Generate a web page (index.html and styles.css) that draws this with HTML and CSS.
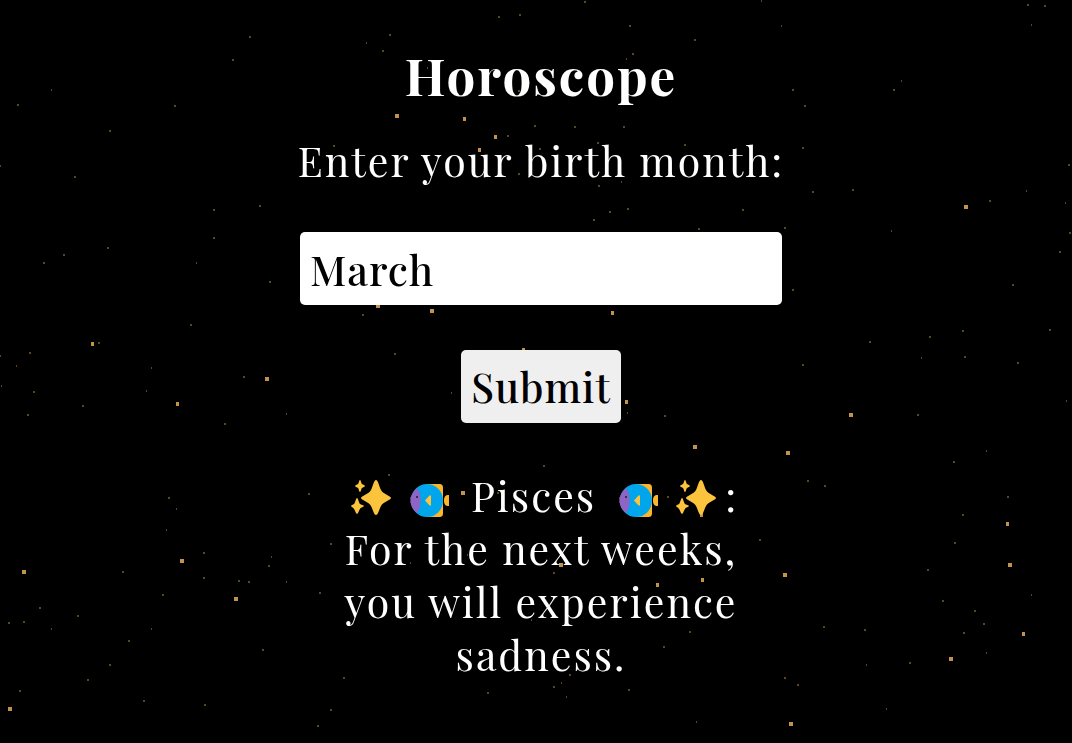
FILE: index.html
```html
<!DOCTYPE html>
<html lang="en">
<head>
<meta charset="utf-8">
<meta name="viewport" content="width=device-width, initial-scale=1">
<title>Horoscope</title>
<link rel="stylesheet" href="styles.css">
</head>
<body>
<svg class="sky" viewBox="0 0 1072 743" preserveAspectRatio="xMidYMid slice" aria-hidden="true">
  <path class="dust" d="M249 37h2M232 60h2M51 90h1M17 105h2M174 106h2M109 131h2M0 166h1M74 177h2M213 210h2M259 206h2M213 238h2M107 248h2M333 146h2
  M584 2h2M498 17h2M519 15h2M389 35h2M366 43h1M382 51h2M629 26h2M694 40h2M632 54h2M626 59h1M427 68h1M518 91h2M534 126h2M574 127h2M623 127h2M507 136h2M539 149h2M597 143h2M684 145h2M518 174h2M598 186h2M621 182h1M609 212h2M627 209h2M593 220h2M698 229h2
  M761 1h1M781 26h1M1027 5h2M1044 6h2M1031 25h1M792 90h2M804 106h2M893 90h2M901 81h1M802 148h2M812 192h2M852 190h2M742 210h2M784 228h2M891 231h1M989 201h2M1026 191h1M1068 165h2M1065 203h1M1069 233h2
  M63 255h2M43 263h2M196 263h1M269 282h2M190 325h2M98 343h2M29 353h2M0 356h1M16 366h1M1 386h1M33 392h2M27 415h2M82 406h2M151 368h1M146 391h1M243 377h2M224 424h2M286 414h1M168 498h2M308 494h2
  M362 315h2M394 354h2M451 393h1M627 413h1M664 416h2M543 466h2
  M1012 285h2M1059 252h2M792 290h2M962 331h2M929 337h2M869 342h2M921 358h1M964 357h2M1049 330h2M1017 363h2M802 365h2M917 415h2M1066 401h1M953 462h2M986 451h1M807 481h2M824 486h2M1007 497h2
  M176 509h1M166 530h1M203 553h2M203 578h2M122 572h2M271 557h1M268 566h2M238 581h2M248 582h2M286 582h1M330 544h2M319 593h2M162 595h2M39 608h2M23 622h2M8 623h2M77 616h2M51 629h1M151 629h1M128 641h2M109 665h2M87 680h2M19 691h2M143 701h2M204 705h2M262 650h2M343 678h2M330 710h2M317 726h2
  M388 475h2M667 497h2M497 493h2M410 563h1M467 555h1M553 573h2M531 620h1M689 632h2M663 647h2M569 675h2M561 683h1M553 687h2M487 693h2M566 697h1M628 690h2M696 722h1
  M962 515h2M954 543h2M759 540h2M927 570h2M1031 595h1M942 601h2M974 611h2M983 624h2M963 633h2M986 653h1M823 627h2M864 630h2M866 665h1M909 663h2M784 678h2M797 685h2M886 709h1"/>
  <path class="star" d="M395 116h4M463 119h3M494 137h3M478 150h3M964 207h4M91 344h3M265 379h4M176 404h3M376 306h4M430 311h4M611 313h3M522 350h3M625 402h3M693 447h4M786 453h4M849 415h4M461 493h4M22 572h4M180 561h4M234 599h4M8 709h4M1006 524h3M1008 565h4M783 575h4M1022 634h3M949 659h4M789 724h4M559 565h4M656 585h3M701 580h3M700 515h3"/>
</svg>
<svg class="symbols" aria-hidden="true">
  <symbol id="sparkles" viewBox="0 0 40 40">
    <path fill="#fcc33d" d="M25 2c2 0 3 6 5 10 2 4 10 6 10 8s-8 4-10 8c-2 4-3 9-5 9s-3-5-5-9c-2-4-10-6-10-8s8-4 10-8c2-4 3-10 5-10zM9 2c1 0 1 3 2 4 1 1 3 1 3 2s-2 1-3 2c-1 1-1 4-2 4s-1-3-2-4c-1-1-3-1-3-2s2-1 3-2c1-1 1-4 2-4zM6 20c1 0 2 5 3 6 1 1 4 1 4 2s-3 1-4 3c-1 1-2 5-3 5s-2-4-3-5c-1-2-3-2-3-3s2-1 3-2c1-1 2-6 3-6z"/>
  </symbol>
  <symbol id="fish" viewBox="0 0 40 40">
    <path fill="#fcb62c" d="M17 6h13c3 0 4 1 4 4v25c0 3-1 4-4 4H17zM40 17c-4 0-5 2-5 5.500s1 5.500 5 5.500z"/>
    <ellipse fill="#00a5ec" cx="18" cy="22.500" rx="16" ry="16.500"/>
    <path fill="#8d65c5" d="M8 10c5 7 5 18 0 25-4-3-6.500-7-6.500-12.500S4 14 8 10z"/>
    <path fill="#fcc33d" d="M16 22.500l4-4.500c1-1 2-1 2 0v9c0 1-1 1-2 0z"/>
    <circle fill="#25143d" cx="8" cy="19" r="1"/>
    <path fill="#594078" d="M1 19h1v6H1z"/>
  </symbol>
</svg>
<main class="page">
  <h1 class="title">Horoscope</h1>
  <form class="form">
    <label class="label" for="month">Enter your birth month:</label>
    <input class="field" id="month" type="text" value="March">
    <button class="submit" type="button">Submit</button>
  </form>
  <p class="result">
    <span class="sign"><svg class="emoji" role="img" aria-label="Sparkles"><use href="#sparkles"/></svg><svg class="emoji" role="img" aria-label="Fish"><use href="#fish"/></svg><span class="name">Pisces</span><svg class="emoji" role="img" aria-label="Fish"><use href="#fish"/></svg><svg class="emoji" role="img" aria-label="Sparkles"><use href="#sparkles"/></svg><span class="colon">:</span></span>
    For the next weeks, you will experience sadness.
  </p>
</main>
</body>
</html>
```
FILE: styles.css
```css
* {
  box-sizing: border-box;
}

body {
  margin: 0;
  min-height: 100vh;
  background: #000;
  color: #fff;
  font-family: "Playfair Display", "Liberation Serif", serif;
  font-size: 41px;
  line-height: 53px;
  letter-spacing: 2px;
}

.sky {
  position: fixed;
  inset: 0;
  z-index: -1;
  width: 100%;
  height: 100%;
}

.dust {
  stroke: #5b4522;
  stroke-width: 2;
}

.star {
  stroke: #c1924b;
  stroke-width: 4;
}

.symbols {
  display: none;
}

.page {
  display: flex;
  flex-direction: column;
  align-items: center;
  padding: 43px 0 43px 10px;
  text-align: center;
}

.title {
  margin: 0 0 27px;
  font-size: 51px;
  line-height: 64px;
  font-weight: 700;
}

.form {
  display: flex;
  flex-direction: column;
  align-items: center;
  gap: 45px;
}

.field,
.submit {
  padding: 10px;
  border: 0;
  border-radius: 5px;
  font-family: inherit;
  font-size: 41px;
  line-height: 53px;
  font-weight: 500;
  letter-spacing: 1px;
  color: #000;
}

.field {
  width: 482px;
  max-width: 100%;
  height: 73px;
  background: #fff;
}

.submit {
  background: #efefef;
}

.result {
  max-width: 420px;
  margin: 46px 0 0;
}

.sign {
  display: flex;
  align-items: center;
  justify-content: center;
  gap: 18px;
  margin-left: 7px;
}

.name {
  margin: 0 4px;
}

.emoji {
  width: 40px;
  height: 40px;
  margin-top: 4px;
}

.colon {
  margin-left: -9px;
}
```
